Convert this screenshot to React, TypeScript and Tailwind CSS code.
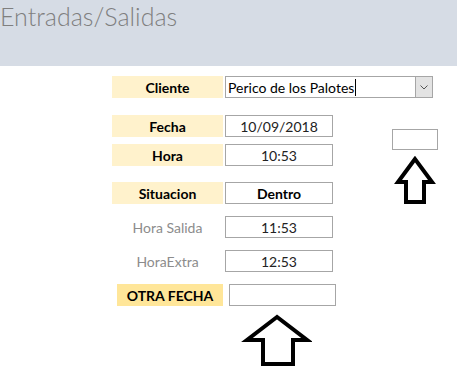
import type { ReactNode } from "react";

const FONT = { fontFamily: "Lato, 'Open Sans', sans-serif" };

function Label({ children, dark }: { children: ReactNode; dark?: boolean }) {
  return (
    <div
      className={`flex h-[22px] items-center justify-center text-[14px] font-bold text-black ${
        dark ? "w-[106px] bg-[#ffe699]" : "w-[111px] bg-[#fff2cc]"
      }`}
    >
      {children}
    </div>
  );
}

function Field({ children, bold }: { children?: ReactNode; bold?: boolean }) {
  return (
    <div
      className={`flex h-[22px] w-[108px] items-center justify-center border border-[#a6a6a6] bg-white text-[14px] text-[#222] ${
        bold ? "font-bold text-black" : ""
      }`}
    >
      {children}
    </div>
  );
}

function UpArrow({ w, h, points }: { w: number; h: number; points: string }) {
  return (
    <svg width={w} height={h} viewBox={`0 0 ${w} ${h}`}>
      <polygon points={points} fill="white" stroke="black" strokeWidth={4} strokeLinejoin="miter" />
    </svg>
  );
}

export default function App() {
  return (
    <div className="relative h-[392px] w-[457px] overflow-hidden bg-white" style={FONT}>
      <header className="h-[66px] bg-[#d6dce5]">
        <h1 className="pt-[1px] text-[25px] font-light leading-[30px] text-[#7f7f7f]">
          Entradas/Salidas
        </h1>
      </header>

      <div className="pl-[112px] pt-[10px]">
        {/* Cliente */}
        <div className="flex gap-[2px]">
          <Label>Cliente</Label>
          <div className="flex h-[22px] w-[208px] items-stretch border border-[#a6a6a6] bg-white">
            <div className="flex flex-1 items-center pl-[2px] text-[14px] text-black">
              Perico de los Palotes
              <span className="ml-[1px] inline-block h-[17px] w-[1px] bg-black" />
            </div>
            <div className="flex w-[17px] items-center justify-center border-l border-[#a6a6a6] bg-[#e3e3e3]">
              <svg width="8" height="5" viewBox="0 0 8 5">
                <path d="M0.5 0.5 L4 4 L7.5 0.5" fill="none" stroke="#555" strokeWidth="1" />
              </svg>
            </div>
          </div>
        </div>

        <div className="mt-[17px] flex">
          <div className="flex flex-col">
            <div className="flex gap-[2px]">
              <Label>Fecha</Label>
              <Field>10/09/2018</Field>
            </div>
            <div className="mt-[7px] flex gap-[2px]">
              <Label>Hora</Label>
              <Field>10:53</Field>
            </div>
            <div className="mt-[16px] flex gap-[2px]">
              <Label>Situacion</Label>
              <Field bold>Dentro</Field>
            </div>
            <div className="mt-[12px] flex gap-[2px]">
              <div className="flex h-[22px] w-[111px] items-center justify-center text-[14px] text-[#8c8c8c]">
                Hora Salida
              </div>
              <Field>11:53</Field>
            </div>
            <div className="mt-[12px] flex gap-[2px]">
              <div className="flex h-[22px] w-[111px] items-center justify-center text-[14px] text-[#8c8c8c]">
                HoraExtra
              </div>
              <Field>12:53</Field>
            </div>
            <div className="mt-[12px] flex pl-[5px]">
              <Label dark>OTRA FECHA</Label>
              <div className="ml-[6px] h-[22px] w-[107px] border border-[#a6a6a6] bg-white" />
            </div>
            <div className="ml-[128px] mt-[3px]">
              <UpArrow w={72} h={62} points="37,8 7,31 23,31 23,55 53,55 53,31 67,31" />
            </div>
          </div>

          <div className="ml-[56px] mt-[14px] flex flex-col">
            <div className="h-[21px] w-[46px] border border-[#a6a6a6] bg-white" />
            <div className="mt-[3px]">
              <UpArrow w={46} h={56} points="23,6 6,29 14,29 14,49 32,49 32,29 40,29" />
            </div>
          </div>
        </div>
      </div>
    </div>
  );
}
